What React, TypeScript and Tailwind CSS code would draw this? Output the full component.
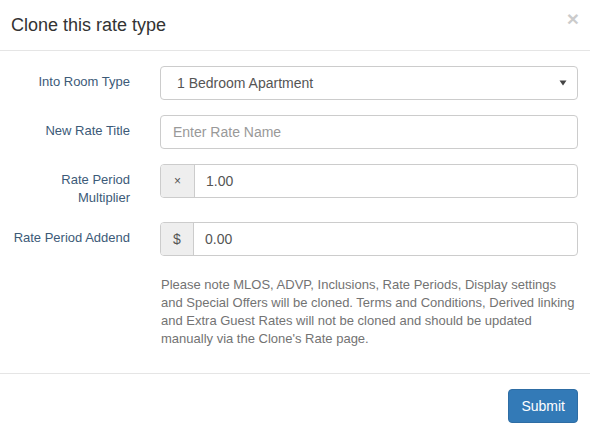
import React from "react";

export default function App() {
  const font = { fontFamily: '"Liberation Sans", Arial, sans-serif' };
  return (
    <div className="w-[590px] h-[428px] bg-white overflow-hidden text-[#333]" style={font}>
      <div className="h-[51px] border-b border-[#e5e5e5] flex items-center justify-between pl-[11px] pr-[11px]">
        <h4 className="text-[18px] leading-[20px] text-[#333] -mt-[1px]">Clone this rate type</h4>
        <span className="text-[21px] font-bold leading-none text-black opacity-20 -mt-[14px]">×</span>
      </div>
      <div className="pt-[15px] pr-[12px] pb-[25px]">
        <div className="flex">
          <label className="w-[160px] pr-[30px] text-right text-[13px] leading-[18px] pt-[7px] text-[#3c5a78]">Into Room Type</label>
          <div className="flex-1 h-[34px] border border-[#ccc] rounded-[4px] flex items-center justify-between pl-[16px] pr-[10px] text-[14px] text-[#555]">
            <span>1 Bedroom Apartment</span>
            <svg width="8" height="6" viewBox="0 0 8 6"><path d="M0.5 0.5 L7.5 0.5 L4 5.5 Z" fill="#444" /></svg>
          </div>
        </div>
        <div className="flex mt-[15px]">
          <label className="w-[160px] pr-[30px] text-right text-[13px] leading-[18px] pt-[7px] text-[#3c5a78]">New Rate Title</label>
          <div className="flex-1 h-[34px] border border-[#ccc] rounded-[4px] flex items-center pl-[12px] text-[14px] text-[#999]">
            Enter Rate Name
          </div>
        </div>
        <div className="flex mt-[15px] h-[43px]">
          <label className="w-[160px] pr-[30px] text-right text-[13px] leading-[18px] pt-[7px] text-[#3c5a78]">Rate Period<br />Multiplier</label>
          <div className="flex-1 h-[34px] border border-[#ccc] rounded-[4px] flex text-[14px] text-[#555] overflow-hidden">
            <div className="w-[34px] bg-[#eee] border-r border-[#ccc] flex items-center justify-center text-[12px]">×</div>
            <div className="flex items-center pl-[11px]">1.00</div>
          </div>
        </div>
        <div className="flex mt-[15px]">
          <label className="w-[160px] pr-[30px] text-right text-[13px] leading-[18px] pt-[7px] text-[#3c5a78]">Rate Period Addend</label>
          <div className="flex-1 h-[34px] border border-[#ccc] rounded-[4px] flex text-[14px] text-[#555] overflow-hidden">
            <div className="w-[33px] bg-[#eee] border-r border-[#ccc] flex items-center justify-center">$</div>
            <div className="flex items-center pl-[11px]">0.00</div>
          </div>
        </div>
        <p className="ml-[161px] mt-[20px] text-[13px] leading-[18px] text-[#737373]">
          Please note MLOS, ADVP, Inclusions, Rate Periods, Display settings and Special Offers will be cloned. Terms and Conditions, Derived linking and Extra Guest Rates will not be cloned and should be updated manually via the Clone's Rate page.
        </p>
      </div>
      <div className="border-t border-[#e5e5e5] pt-[15px] pr-[12px] flex justify-end">
        <button className="h-[34px] px-[12px] bg-[#337ab7] border border-[#2e6da4] rounded-[4px] text-white text-[14px]">Submit</button>
      </div>
    </div>
  );
}
